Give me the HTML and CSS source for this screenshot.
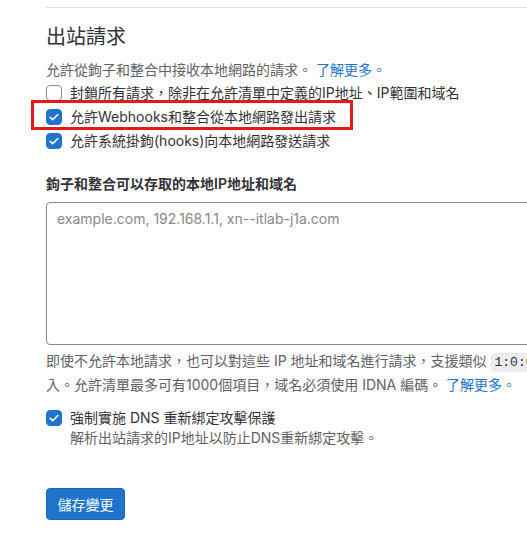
FILE: index.html
```html
<!DOCTYPE html>
<html lang="zh-Hant">
<head>
<meta charset="utf-8">
<link rel="stylesheet" href="styles.css">
</head>
<body>
<div class="page">
  <section class="section">
    <h4 class="title">出站請求</h4>
    <p class="desc">允許從鉤子和整合中接收本地網路的請求。 <a class="link" href="#">了解更多。</a></p>

    <label class="check">
      <span class="box"></span>
      <span class="check-text">封鎖所有請求，除非在允許清單中定義的IP地址、IP範圍和域名</span>
    </label>
    <label class="check">
      <span class="box on"><svg viewBox="0 0 16 16" width="16" height="16"><path d="M4.2 8.3l2.5 2.4 5.1-5.2" fill="none" stroke="#fff" stroke-width="1.6" stroke-linecap="round" stroke-linejoin="round"/></svg></span>
      <span class="check-text">允許Webhooks和整合從本地網路發出請求</span>
      <span class="highlight"></span>
    </label>
    <label class="check">
      <span class="box on"><svg viewBox="0 0 16 16" width="16" height="16"><path d="M4.2 8.3l2.5 2.4 5.1-5.2" fill="none" stroke="#fff" stroke-width="1.6" stroke-linecap="round" stroke-linejoin="round"/></svg></span>
      <span class="check-text">允許系統掛鉤(hooks)向本地網路發送請求</span>
    </label>

    <div class="field-label">鉤子和整合可以存取的本地IP地址和域名</div>
    <textarea class="textarea" placeholder="example.com, 192.168.1.1, xn--itlab-j1a.com"></textarea>
    <p class="help">即使不允許本地請求，也可以對這些 IP 地址和域名進行請求，支援類似 <code class="code">1:0:0:0:0:0:0:0/124</code> 或 <code class="code">127.0.0.0/28</code> 的 IP 範圍。目前不支援網域萬用字元。使用逗號、分號或換行符號分隔多個輸<br>入。允許清單最多可有1000個項目，域名必須使用 IDNA 編碼。 <a class="link" href="#">了解更多。</a></p>

    <label class="check dns">
      <span class="box on"><svg viewBox="0 0 16 16" width="16" height="16"><path d="M4.2 8.3l2.5 2.4 5.1-5.2" fill="none" stroke="#fff" stroke-width="1.6" stroke-linecap="round" stroke-linejoin="round"/></svg></span>
      <span class="check-text">強制實施 DNS 重新綁定攻擊保護</span>
    </label>
    <p class="sub">解析出站請求的IP地址以防止DNS重新綁定攻擊。</p>

    <button class="btn" type="button">儲存變更</button>
  </section>
</div>
</body>
</html>
```

FILE: styles.css
```css
html, body {
  margin: 0;
  padding: 0;
  background: #fff;
  overflow: hidden;
}
body {
  font-family: "Inter", "Noto Sans CJK TC", sans-serif;
  font-size: 14px;
  line-height: 20px;
  color: #333238;
}
.page {
  width: 1000px;
  padding-left: 46px;
  padding-top: 7px;
}
.section {
  border-top: 1px solid #dcdcde;
  padding-top: 17px;
}
.title {
  margin: 0;
  font-size: 20px;
  line-height: 24px;
  font-weight: 400;
  color: #333238;
}
.desc {
  margin: 11px 0 3px;
  color: #626168;
}
.link {
  color: #1f75cb;
  text-decoration: none;
}
.check {
  position: relative;
  display: flex;
  align-items: center;
  width: fit-content;
  margin-bottom: 4px;
}
.box {
  box-sizing: border-box;
  width: 16px;
  height: 16px;
  border-radius: 4px;
  border: 1px solid #89888d;
  background: #fff;
  margin-right: 8px;
  flex: none;
  display: flex;
}
.box.on {
  background: #1f75cb;
  border-color: #1f75cb;
}
.box svg {
  margin: -1px;
}
.highlight {
  position: absolute;
  left: -15px;
  right: -17px;
  top: -7px;
  bottom: -3px;
  border: 3px solid #e5191c;
  pointer-events: none;
}
.field-label {
  margin-top: 23px;
  font-weight: 600;
}
.textarea {
  display: block;
  box-sizing: border-box;
  width: 900px;
  height: 143px;
  margin-top: 8px;
  padding: 6px 10px;
  border: 1px solid #89888d;
  border-radius: 4px;
  font-family: "Inter", "Noto Sans CJK TC", sans-serif;
  font-size: 14px;
  line-height: 20px;
  resize: none;
}
.textarea::placeholder {
  color: #89888d;
}
.help {
  margin: 5px 0 0;
  line-height: 22px;
  color: #626168;
  white-space: nowrap;
}
.code {
  font-family: "Liberation Mono", monospace;
  font-size: 13px;
  background: #ececef;
  color: #333238;
  padding: 2px 4px;
  border-radius: 4px;
}
.dns {
  margin-top: 12px;
  margin-bottom: 0;
}
.sub {
  margin: 0 0 0 24px;
  color: #626168;
}
.btn {
  margin-top: 40px;
  height: 32px;
  padding: 0 10.5px;
  border: 1px solid #1068bf;
  border-radius: 4px;
  background: #1f75cb;
  color: #fff;
  font-family: "Inter", "Noto Sans CJK TC", sans-serif;
  font-size: 14px;
}
```
